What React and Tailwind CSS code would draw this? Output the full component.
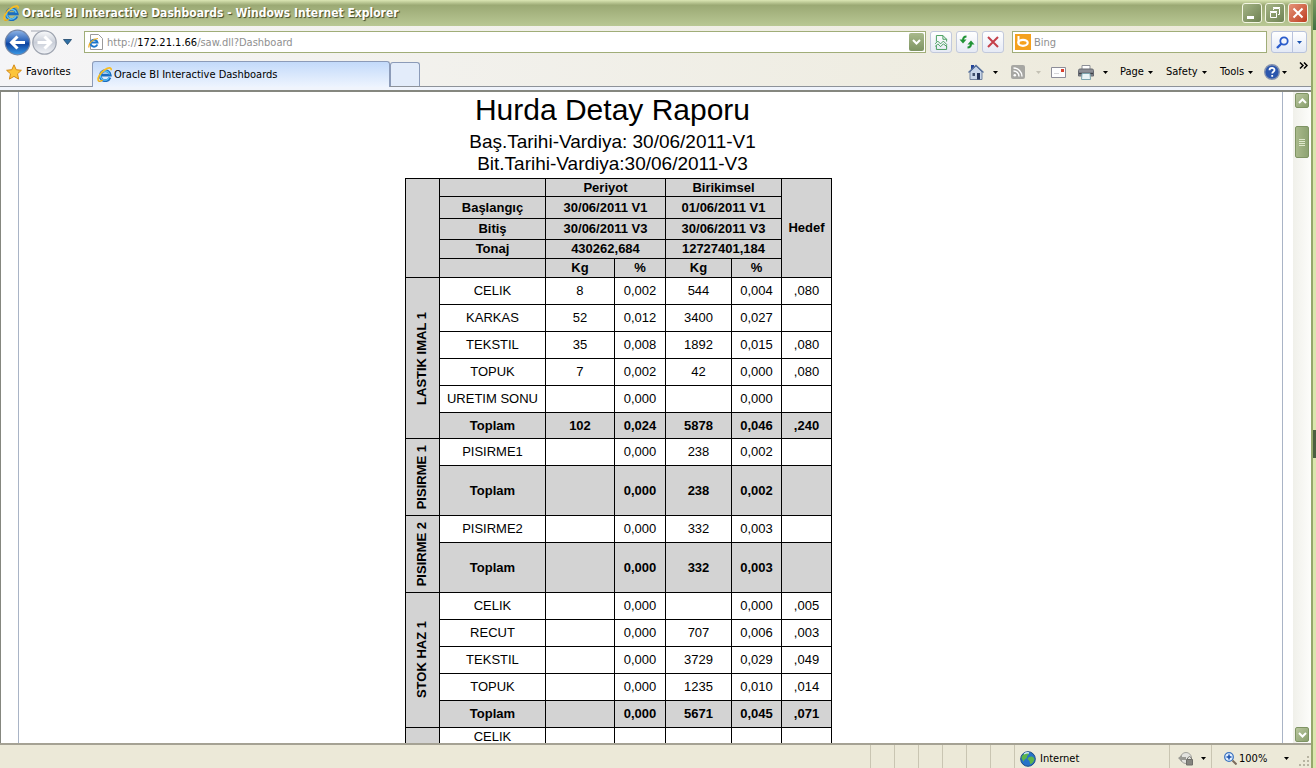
const SECTIONS = [
  { name: 'LASTIK IMAL 1', rows: [
    ['CELIK', '8', '0,002', '544', '0,004', ',080'],
    ['KARKAS', '52', '0,012', '3400', '0,027', ''],
    ['TEKSTIL', '35', '0,008', '1892', '0,015', ',080'],
    ['TOPUK', '7', '0,002', '42', '0,000', ',080'],
    ['URETIM SONU', '', '0,000', '', '0,000', ''],
  ], total: ['Toplam', '102', '0,024', '5878', '0,046', ',240'], totalHeight: 'h-[26px]' },
  { name: 'PISIRME 1', rows: [['PISIRME1', '', '0,000', '238', '0,002', '']],
    total: ['Toplam', '', '0,000', '238', '0,002', ''], totalHeight: 'h-[50px]' },
  { name: 'PISIRME 2', rows: [['PISIRME2', '', '0,000', '332', '0,003', '']],
    total: ['Toplam', '', '0,000', '332', '0,003', ''], totalHeight: 'h-[50px]' },
  { name: 'STOK HAZ 1', rows: [
    ['CELIK', '', '0,000', '', '0,000', ',005'],
    ['RECUT', '', '0,000', '707', '0,006', ',003'],
    ['TEKSTIL', '', '0,000', '3729', '0,029', ',049'],
    ['TOPUK', '', '0,000', '1235', '0,010', ',014'],
  ], total: ['Toplam', '', '0,000', '5671', '0,045', ',071'], totalHeight: 'h-[27px]' },
]

const CELL = 'border border-black p-0'
const HEAD = 'border border-black p-0 bg-[#d3d3d3] font-bold'

function IeLogo({ className }) {
  return (
    <svg viewBox="0 0 16 16" className={className} aria-hidden="true">
      <path d="M13.800 11.200A5.300 5.300 0 1 1 14.100 8.700H5" fill="none" stroke="#1a6dc0" strokeWidth="3" />
      <path d="M13 11A4.800 4.800 0 0 1 4 7.500M5.500 5.500A4.800 4.800 0 0 1 13.300 7.900" fill="none" stroke="#5cc4f5" strokeWidth="1.400" />
      <path d="M1.800 15C-.2 12.500 3 6.500 8 3.200 12 .5 15.500 0 15.200 3.500" fill="none" stroke="#f7bd22" strokeWidth="1.800" />
      <path d="M1.500 14.700C2.500 15.800 4.500 15 6 14" fill="none" stroke="#e8a812" strokeWidth="1.300" />
    </svg>
  )
}

function Caret({ className = 'text-black' }) {
  return <svg viewBox="0 0 5 3" className={`w-[5px] h-[3px] shrink-0 ${className}`} aria-hidden="true"><path d="M0 0h5L2.500 3z" fill="currentColor" /></svg>
}

function TitleBar() {
  const btn = 'w-5 h-5 rounded-[3px] border border-[#f4f6e4] flex items-center justify-center'
  return (
    <header className="h-[26px] shrink-0 flex items-center pl-[3px] pr-[3px] bg-linear-to-b from-[#dbe6b4] via-[#9ba974] via-20% to-[#b9c894]">
      <IeLogo className="w-4 h-4" />
      <h1 className="ml-[3px] font-['DejaVu_Sans_Condensed','DejaVu_Sans',sans-serif] text-[12px] font-bold text-white [text-shadow:1px_1px_1px_#3d4627] whitespace-nowrap">Oracle BI Interactive Dashboards - Windows Internet Explorer</h1>
      <div className="ml-auto flex gap-[3px]">
        <button aria-label="Minimize" className={`${btn} bg-linear-to-br from-[#a5b486] to-[#6f8253]`}>
          <svg viewBox="0 0 18 18" className="w-[18px] h-[18px]"><path d="M4 12h7v3H4z" fill="#fff" /></svg>
        </button>
        <button aria-label="Restore" className={`${btn} bg-linear-to-br from-[#a5b486] to-[#6f8253]`}>
          <svg viewBox="0 0 18 18" className="w-[18px] h-[18px]" fill="none" stroke="#fff"><path d="M4.500 8.500h6v5h-6zM4 7.500h7M7.500 6V4.500h6v6H12M7 3.500h7" /></svg>
        </button>
        <button aria-label="Close" className={`${btn} bg-linear-to-br from-[#e49378] to-[#bd3a1c]`}>
          <svg viewBox="0 0 18 18" className="w-[18px] h-[18px]"><path d="M4.500 4.500l9 9M13.500 4.500l-9 9" stroke="#fff" strokeWidth="2" /></svg>
        </button>
      </div>
    </header>
  )
}

function NavBar() {
  const btn = 'w-[22px] h-[22px] border border-[#c2c9dc] rounded-[3px] bg-linear-to-b from-white to-[#e6eaf5] flex items-center justify-center shrink-0'
  return (
    <div className="h-8 shrink-0 flex items-center pl-1 pr-1 bg-linear-to-r from-[#f5f5f7] to-[#ece9d8]">
      <div className="flex items-center w-20">
        <button aria-label="Back" className="w-[27px] h-[27px] shrink-0">
          <svg viewBox="0 0 27 27">
            <defs>
              <linearGradient id="back" x1="0" y1="0" x2="0" y2="1"><stop offset="0" stopColor="#8fb4e6" /><stop offset=".45" stopColor="#2a62b8" /><stop offset=".55" stopColor="#0e439f" /><stop offset="1" stopColor="#3b9be8" /></linearGradient>
            </defs>
            <circle cx="13.500" cy="13.500" r="12.300" fill="url(#back)" stroke="#7586a5" strokeWidth="1.200" />
            <path d="M21 13.500H8M13.500 7.500l-6 6 6 6" fill="none" stroke="#fff" strokeWidth="3" />
          </svg>
        </button>
        <button aria-label="Forward" className="w-[27px] h-[27px] shrink-0">
          <svg viewBox="0 0 27 27">
            <defs>
              <linearGradient id="fwd" x1="0" y1="0" x2="0" y2="1"><stop offset="0" stopColor="#fafbfc" /><stop offset=".5" stopColor="#c9ced8" /><stop offset="1" stopColor="#f2f4f8" /></linearGradient>
            </defs>
            <path d="M0 2h14" stroke="#a5a9b3" />
            <circle cx="13.500" cy="13.500" r="11.700" fill="url(#fwd)" stroke="#9ea4b0" strokeWidth="1.200" />
            <path d="M6.500 13.500h12M13.500 7.500l6 6-6 6" fill="none" stroke="#fff" strokeWidth="3" />
          </svg>
        </button>
        <button aria-label="Recent pages" className="ml-[5px]">
          <svg viewBox="0 0 9 6" className="w-[9px] h-[6px]"><path d="M.5.5h8l-4 5z" fill="#2f6fa5" stroke="#1c4569" strokeWidth=".8" /></svg>
        </button>
      </div>
      <div className="flex-1 min-w-0 flex items-center h-[22px] bg-white border border-[#a0ad78] pl-[3px]">
        <svg viewBox="0 0 15 16" className="w-[15px] h-4 shrink-0" aria-hidden="true">
          <path d="M2.500.5h8l4 4v11h-12z" fill="#fff" stroke="#9a9a9a" />
          <path d="M9.300 10.500A3.500 3.500 0 1 1 9.500 8.600H3" fill="none" stroke="#1c77cc" strokeWidth="2" />
          <path d="M1 13.500C0 10 5 4.500 10 4.500" fill="none" stroke="#f0ae20" strokeWidth="1.200" />
        </svg>
        <span className="ml-1 pt-px text-[#8f8f8f]">http://<span className="text-black">172.21.1.66</span>/saw.dll?Dashboard</span>
        <input aria-label="Address" className="flex-1 min-w-0 outline-none" />
        <button aria-label="Show address history" className="w-[15px] h-[18px] mr-px rounded-[2px] bg-linear-to-b from-[#a9b98b] to-[#7e9463] flex items-center justify-center">
          <svg viewBox="0 0 9 6" className="w-[9px] h-[6px]"><path d="M1 1l3.500 3.500L8 1" fill="none" stroke="#fff" strokeWidth="2" /></svg>
        </button>
      </div>
      <div className="flex gap-1 ml-1">
        <button aria-label="Compatibility view" className={btn}>
          <svg viewBox="0 0 14 16" className="w-[13px] h-[15px]" fill="none" stroke="#3f9a55"><path d="M1.500 7V.5h7l4 4V7M8.500.5v4h4M1.500 11v4.500h11V11" /><path d="M0 9.500l3-3 3 3 3-3 4 4M0 12.500l3-3 3 3 3-3 4 3" /></svg>
        </button>
        <button aria-label="Refresh" className={btn}>
          <svg viewBox="0 0 16 16" className="w-4 h-4" fill="none" stroke="#219436" strokeWidth="2"><path d="M7.500 2.500c-2 0-3.500 1-3.500 4" /><path d="M8.500 13.500c2 0 3.500-1 3.500-4" /><path d="M.5 5.500h7L4 9.500zM8.500 10.500h7L12 6.500z" fill="#219436" stroke="none" /></svg>
        </button>
        <button aria-label="Stop" className={btn}>
          <svg viewBox="0 0 12 12" className="w-3 h-3"><path d="M1 1l10 10M11 1L1 11" stroke="#c5404a" strokeWidth="2" /></svg>
        </button>
      </div>
      <div className="ml-2 w-[255px] h-[22px] flex items-center bg-white border border-[#a0ad78] pl-[2px]">
        <svg viewBox="0 0 16 16" className="w-4 h-4 shrink-0" aria-hidden="true">
          <path d="M0 0h16v16H0z" fill="#f5a11c" />
          <path d="M3.500 2v7" fill="none" stroke="#fff" strokeWidth="2" />
          <ellipse cx="8" cy="8.800" rx="4.700" ry="3" fill="none" stroke="#fff" strokeWidth="2.200" />
        </svg>
        <input aria-label="Search" placeholder="Bing" className="ml-[3px] pt-px flex-1 min-w-0 outline-none placeholder:text-[#8f8f8f]" />
      </div>
      <div className="ml-1 flex h-[22px] border border-[#b9c3dc] rounded-[3px] bg-linear-to-b from-white to-[#e3e9f6]">
        <button aria-label="Search the web" className="w-[21px] flex items-center justify-center border-r border-[#b9c3dc]">
          <svg viewBox="0 0 13 13" className="w-[13px] h-[13px]" fill="none" stroke="#2a5ccb"><circle cx="8" cy="5" r="3.700" strokeWidth="1.800" /><path d="M5.500 7.500L1 12" strokeWidth="2.400" /></svg>
        </button>
        <button aria-label="Search options" className="w-[13px] flex items-center justify-center"><Caret className="text-[#1c54b0]" /></button>
      </div>
    </div>
  )
}

function CommandBar() {
  const item = 'flex items-center text-left whitespace-nowrap'
  return (
    <div className="grid h-7 grid-cols-[43px_40px_27px_42px_46px_54px_44px_35px_12px] items-center">
      <button aria-label="Home" className={item}>
        <svg viewBox="0 0 16 16" className="w-4 h-4 mr-[9px]">
          <path d="M3 1h3v4H3z" fill="#24459a" />
          <path d="M2 8l6-6 6 6v7.500H2z" fill="#c8d6ea" stroke="#71829f" />
          <path d="M.5 8.500L8 1.500l7.500 7" fill="none" stroke="#56709c" strokeWidth="1.400" />
          <path d="M4.500 9H7v3H4.500z" fill="#3f4f6c" /><path d="M9 9h3v6.500H9z" fill="#24345c" />
        </svg>
        <Caret />
      </button>
      <button aria-label="Feeds" className={item}>
        <svg viewBox="0 0 14 14" className="w-[14px] h-[14px] mr-[11px]">
          <rect width="14" height="14" rx="2" fill="#a7a7a3" />
          <circle cx="3.800" cy="10.200" r="1.300" fill="#fff" />
          <path d="M2.500 6a5.500 5.500 0 0 1 5.500 5.500M2.500 3a8.500 8.500 0 0 1 8.500 8.500" fill="none" stroke="#fff" strokeWidth="1.400" />
        </svg>
        <Caret className="text-[#c4c1b4]" />
      </button>
      <button aria-label="Read mail" className={item}>
        <svg viewBox="0 0 15 11" className="w-[15px] h-[11px]"><path d="M.5.5h14v10H.5z" fill="#fdfdfd" stroke="#8d8d98" /><path d="M10 2h3v3h-3z" fill="#d8412f" /><path d="M3 6.500h5" stroke="#d5d5d8" /></svg>
      </button>
      <button aria-label="Print" className={item}>
        <svg viewBox="0 0 16 15" className="w-4 h-[15px] mr-[9px]">
          <path d="M4 .5h8V5H4z" fill="#fff" stroke="#8c8f96" />
          <path d="M.5 5.500q0-1.500 1.500-1.500h12q1.500 0 1.500 1.500V11H.5z" fill="#8b8e95" stroke="#666970" />
          <path d="M1 8.500h14" stroke="#3f4248" strokeWidth="1.500" />
          <path d="M4 8.500h8l.5 6h-9z" fill="#e9f4f6" stroke="#7ba4ae" />
        </svg>
        <Caret />
      </button>
      <button className={`${item} gap-1`}>Page<Caret /></button>
      <button className={`${item} gap-1`}>Safety<Caret /></button>
      <button className={`${item} gap-1`}>Tools<Caret /></button>
      <button aria-label="Help" className={item}>
        <svg viewBox="0 0 16 16" className="w-4 h-4 mr-[2px]">
          <circle cx="8" cy="8" r="7.300" fill="#2b56ad" stroke="#8593b0" strokeWidth="1.400" />
          <path d="M5.500 6.300C5.500 3.200 10.500 3.200 10.500 6c0 1.800-2.300 1.700-2.300 3.500M8.200 11v1.800" fill="none" stroke="#fff" strokeWidth="1.800" />
        </svg>
        <Caret />
      </button>
      <button aria-label="More commands" className="self-start mt-1">
        <svg viewBox="0 0 9 7" className="w-[9px] h-[7px]" fill="none" stroke="#000" strokeWidth="1.500"><path d="M1 .5l3 3-3 3M5 .5l3 3-3 3" /></svg>
      </button>
    </div>
  )
}

function TabRow() {
  return (
    <div className="h-[29px] shrink-0 flex items-end justify-between bg-linear-to-r from-[#f5f5f7] to-[#ece9d8] border-b border-[#8d9299]">
      <div className="flex items-end">
        <button className="w-[92px] h-7 flex items-center pl-[6px] gap-1">
          <svg viewBox="0 0 16 16" className="w-4 h-4"><path d="M8 .8l2.200 4.900 5.200.6-3.900 3.500 1.100 5.300L8 12.400l-4.600 2.700 1.100-5.300L.6 6.300l5.200-.6z" fill="#fcc53a" stroke="#d48917" /></svg>
          Favorites
        </button>
        <button className="w-[298px] h-[26px] -mb-px flex items-center gap-[2px] pl-1 rounded-t-[3px] border border-b-0 border-[#8c9bb8] bg-linear-to-b from-[#c3dafa] to-[#eef4fe]">
          <IeLogo className="w-[15px] h-[15px]" />
          Oracle BI Interactive Dashboards
        </button>
        <button aria-label="New tab" className="w-[30px] h-6 rounded-t-[3px] border border-b-0 border-[#8c9bb8] bg-[#e3ecfa]" />
      </div>
      <CommandBar />
    </div>
  )
}

function DataRow({ cells, height, bold, lead }) {
  return (
    <tr className={`${height} ${bold ? 'bg-[#d3d3d3] font-bold' : ''}`}>
      {lead}
      {cells.map((c, i) => <td key={i} className={CELL}>{c}</td>)}
    </tr>
  )
}

function SectionHead({ name, span }) {
  return (
    <th rowSpan={span} scope="rowgroup" className={HEAD}>
      <div className="flex items-center justify-center">
        <span className="[writing-mode:vertical-rl] rotate-180 whitespace-nowrap">{name}</span>
      </div>
    </th>
  )
}

function ReportTable() {
  return (
    <table className="w-[426px] table-fixed border-collapse text-center text-[13px] leading-4">
      <colgroup>
        <col className="w-[34px]" /><col className="w-[106px]" /><col className="w-[69px]" /><col className="w-[51px]" />
        <col className="w-[66px]" /><col className="w-[50px]" /><col className="w-[50px]" />
      </colgroup>
      <thead>
        <tr className="h-[18px]">
          <th rowSpan={5} className={HEAD} />
          <th className={HEAD} />
          <th colSpan={2} className={HEAD}>Periyot</th>
          <th colSpan={2} className={HEAD}>Birikimsel</th>
          <th rowSpan={5} className={HEAD}>Hedef</th>
        </tr>
        <tr className="h-[22px]">
          <th className={HEAD}>Başlangıç</th>
          <th colSpan={2} className={HEAD}>30/06/2011 V1</th>
          <th colSpan={2} className={HEAD}>01/06/2011 V1</th>
        </tr>
        <tr className="h-[21px]">
          <th className={HEAD}>Bitiş</th>
          <th colSpan={2} className={HEAD}>30/06/2011 V3</th>
          <th colSpan={2} className={HEAD}>30/06/2011 V3</th>
        </tr>
        <tr className="h-[19px]">
          <th className={HEAD}>Tonaj</th>
          <th colSpan={2} className={HEAD}>430262,684</th>
          <th colSpan={2} className={HEAD}>12727401,184</th>
        </tr>
        <tr className="h-[19px]">
          <th className={HEAD} />
          <th className={HEAD}>Kg</th>
          <th className={HEAD}>%</th>
          <th className={HEAD}>Kg</th>
          <th className={HEAD}>%</th>
        </tr>
      </thead>
      {SECTIONS.map((s) => (
        <tbody key={s.name}>
          {s.rows.map((cells, i) => (
            <DataRow key={cells[0]} cells={cells} height="h-[27px]"
              lead={i === 0 && <SectionHead name={s.name} span={s.rows.length + 1} />} />
          ))}
          <DataRow cells={s.total} height={s.totalHeight} bold />
        </tbody>
      ))}
      <tbody>
        <DataRow cells={['CELIK', '', '', '', '', '']} height="h-[18px]" lead={<th className={HEAD} />} />
      </tbody>
    </table>
  )
}

function ScrollBar() {
  const btn = 'w-[14px] h-[15px] shrink-0 rounded-[2px] border border-[#7f9464] bg-linear-to-br from-[#b9c69e] to-[#8a9f6e] flex items-center justify-center'
  return (
    <div className="w-[18px] shrink-0 flex flex-col items-center bg-linear-to-r from-[#f0f0ea] to-[#fdfdfb] py-px">
      <button aria-label="Scroll up" className={btn}>
        <svg viewBox="0 0 9 6" className="w-[9px] h-[6px]"><path d="M1 5l3.500-3.500L8 5" fill="none" stroke="#fff" strokeWidth="2" /></svg>
      </button>
      <div className="flex-1 pt-[18px]">
        <div className="w-[14px] h-8 rounded-[2px] border border-[#7f9464] bg-linear-to-r from-[#a9b98b] to-[#8ea373] flex flex-col items-center justify-center gap-px">
          <i className="w-[6px] h-px bg-[#dfe8cc]" /><i className="w-[6px] h-px bg-[#dfe8cc]" /><i className="w-[6px] h-px bg-[#dfe8cc]" /><i className="w-[6px] h-px bg-[#dfe8cc]" />
        </div>
      </div>
      <button aria-label="Scroll down" className={btn}>
        <svg viewBox="0 0 9 6" className="w-[9px] h-[6px]"><path d="M1 1l3.500 3.500L8 1" fill="none" stroke="#fff" strokeWidth="2" /></svg>
      </button>
    </div>
  )
}

function StatusBar() {
  return (
    <footer className="h-[25px] shrink-0 flex items-stretch justify-end border-t-2 border-[#a5a294] bg-[#ece9d8]">
      {[0, 1, 2, 3, 4, 5].map((i) => <div key={i} className="w-6 border-l border-[#c9c5b2]" />)}
      <div className="w-[155px] border-l border-[#c9c5b2] flex items-center pl-[5px] pt-1 gap-1">
        <svg viewBox="0 0 16 16" className="w-4 h-4" aria-hidden="true">
          <circle cx="8" cy="8" r="7.300" fill="#2672c8" stroke="#1b4c86" />
          <path d="M2 5c2-3 5-4 7-3 0 2-2 2-2 4S4 8 4 10 2 8 1.500 7zM10 6c2-1 3.500 0 4.500 2-1 4-3 5-4 5s0-3-2-4 0-3 1.500-3z" fill="#5cb54a" />
          <path d="M4 3q3-2 5-1" fill="none" stroke="#cfe8ff" strokeWidth="1.500" />
        </svg>
        Internet
      </div>
      <button aria-label="Protected mode" className="w-[42px] border-l border-[#c9c5b2] flex items-center pl-2 pt-1 gap-[7px]">
        <svg viewBox="0 0 16 14" className="w-4 h-[14px]">
          <circle cx="8" cy="6" r="5.500" fill="#e3e3df" stroke="#a3a39d" />
          <path d="M0 6l4-3v2h4v3H4v2z" fill="#9a9a94" />
          <path d="M8.500 7.500h6V13h-6z" fill="#85857f" stroke="#6d6d68" /><path d="M9.500 7.500V6q2-3 4 0v1.500" fill="none" stroke="#777771" />
        </svg>
        <Caret />
      </button>
      <button aria-label="Change zoom level" className="w-[88px] border-l border-[#c9c5b2] flex items-center pl-3 pt-1">
        <svg viewBox="0 0 13 13" className="w-[13px] h-[13px] mr-[2px]"><circle cx="5" cy="5" r="4.300" fill="#e4f1ff" stroke="#3a72c0" strokeWidth="1.300" /><path d="M2.500 5h5M5 2.500v5" stroke="#174fae" strokeWidth="1.500" /><path d="M8.500 8.500l4 4" stroke="#7b6b5e" strokeWidth="2" /></svg>
        <span className="w-[45px] text-left">100%</span>
        <Caret />
      </button>
      <svg viewBox="0 0 12 12" className="w-3 h-3 self-end" aria-hidden="true"><path d="M8 0h2v2H8zM8 4h2v2H8zM4 4h2v2H4zM8 8h2v2H8zM4 8h2v2H4zM0 8h2v2H0z" fill="#b8b4a2" /></svg>
    </footer>
  )
}

export default function App() {
  return (
    <div className="h-screen flex overflow-hidden bg-white text-black font-['DejaVu_Sans_Condensed','DejaVu_Sans',sans-serif] text-[11px] leading-4">
      <div className="flex-1 min-w-0 flex flex-col">
        <TitleBar />
        <NavBar />
        <TabRow />
        <div className="h-[5px] shrink-0 bg-[#f0f4fc] border-b-2 border-[#85877f]" />
        <div className="flex-1 min-h-0 flex overflow-hidden border-l border-[#85877f]">
          <main className="flex-1 min-w-0 ml-[17px] mr-[10px] border-x border-[#a9b4c6] flex flex-col items-center pr-16 overflow-hidden font-['Liberation_Sans',Arial,sans-serif]">
            <div className="pr-3 text-center">
              <h2 className="text-[30px] leading-9 mb-[3px]">Hurda Detay Raporu</h2>
              <p className="text-[19px] leading-[22px]">Baş.Tarihi-Vardiya: 30/06/2011-V1</p>
              <p className="text-[19px] leading-[22px] mb-[3px]">Bit.Tarihi-Vardiya:30/06/2011-V3</p>
            </div>
            <ReportTable />
          </main>
          <ScrollBar />
        </div>
        <StatusBar />
      </div>
      <div className="w-[5px] shrink-0 flex flex-col bg-[#dbe6ae] border-l-2 border-[#96a76c]">
        <div className="h-[30px] bg-linear-to-b from-[#7b9a62] to-[#3f7040]" />
        <div className="h-[400px]" />
        <div className="h-7 bg-[#4b6040]" />
      </div>
    </div>
  )
}
